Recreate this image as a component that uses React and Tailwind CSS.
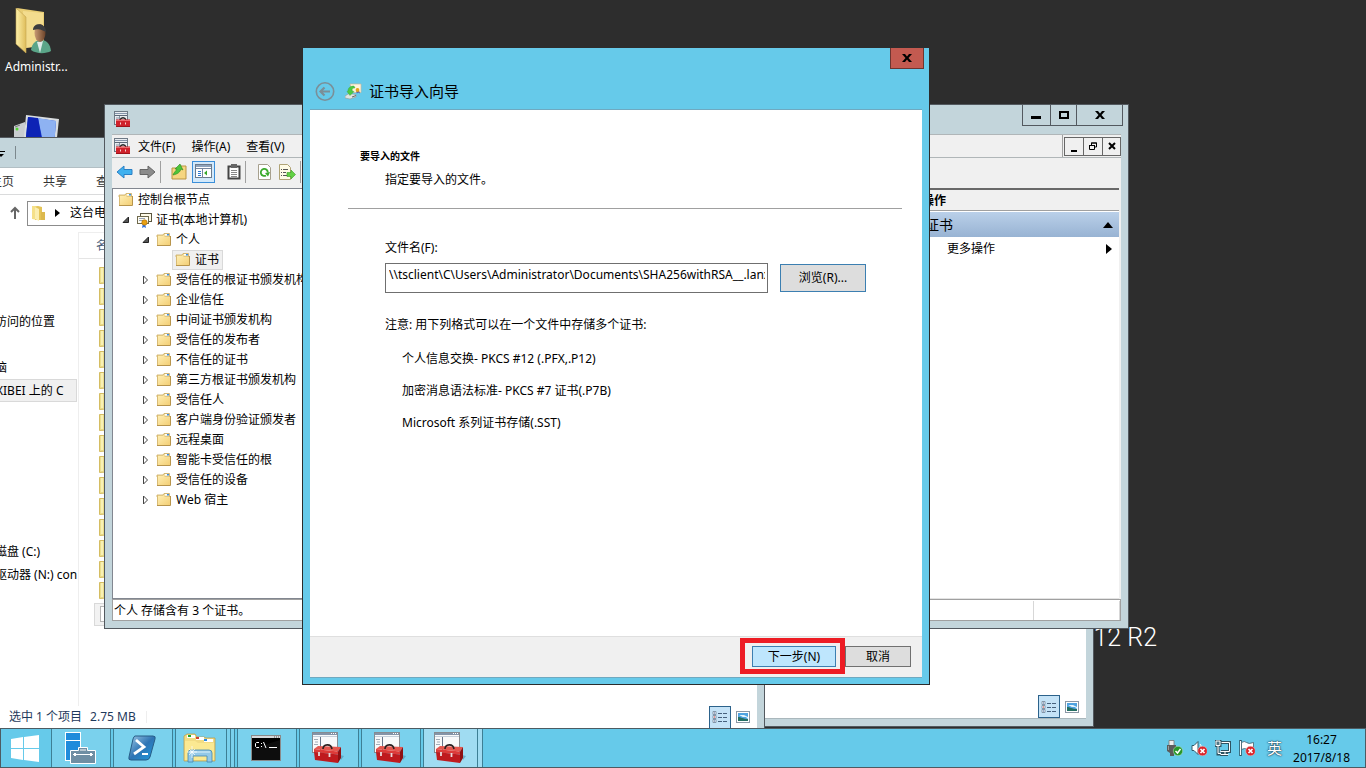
import React from "react";

const FONT = "font-['Noto_Sans','Noto_Sans_CJK_SC',sans-serif]";

const treeItems = [
  { text: "受信任的根证书颁发机构" },
  { text: "企业信任" },
  { text: "中间证书颁发机构" },
  { text: "受信任的发布者" },
  { text: "不信任的证书" },
  { text: "第三方根证书颁发机构" },
  { text: "受信任人" },
  { text: "客户端身份验证颁发者" },
  { text: "远程桌面" },
  { text: "智能卡受信任的根" },
  { text: "受信任的设备" },
  { text: "Web 宿主" },
];

// one entry per 23px row, empty rows are blank
const navRows = ["访问的位置", "", "脑", "XIBEI 上的 C", "", "", "", "", "", "", "磁盘 (C:)", "驱动器 (N:) con"];

const formats = [
  "个人信息交换- PKCS #12 (.PFX,.P12)",
  "加密消息语法标准- PKCS #7 证书(.P7B)",
  "Microsoft 系列证书存储(.SST)",
];

/* ---------- icons ---------- */

const FolderIcon = () => (
  <svg width="16" height="16" viewBox="0 0 16 16" className="shrink-0">
    <defs>
      <linearGradient id="folderFill" x1="0" y1="0" x2="1" y2="1">
        <stop offset="0" stopColor="#ffefb5" />
        <stop offset="1" stopColor="#f2cd72" />
      </linearGradient>
    </defs>
    <path d="M1 3h6l1-1.500h5.500V5H1z" fill="#f3dc98" stroke="#c9a95f" strokeWidth=".8" />
    <rect x="9" y="2" width="4" height="1.500" fill="#fff" />
    <rect x="11" y="2" width="2" height="1.500" fill="#3d8fe0" />
    <path d="M1 4h7l1 1h5v9H1z" fill="url(#folderFill)" />
    <path d="M1.500 14V4" stroke="#d8bb74" />
    <path d="M1 13.500h13.500V4" fill="none" stroke="#b8954c" />
  </svg>
);

const CertStoreIcon = () => (
  <svg width="16" height="16" viewBox="0 0 16 16" className="shrink-0">
    <rect x="4.500" y="1.500" width="11" height="8" fill="#fffbe8" stroke="#5b5640" />
    <rect x="1.500" y="4.500" width="11" height="7" fill="#fffdf4" stroke="#6f694c" />
    <path d="M3 6.500h6M3 8.500h4" stroke="#98a4b4" />
    <path d="M7 11l-1 5 2-1 2 1-1-5" fill="#2f6fe0" />
    <circle cx="8.500" cy="10.500" r="2.700" fill="#e8a013" stroke="#a96a00" strokeWidth=".6" />
  </svg>
);

const MmcIcon = () => (
  <svg width="17" height="17" viewBox="0 0 17 17" className="shrink-0">
    <rect x=".5" y=".5" width="13" height="13" fill="#e9edf1" stroke="#6e7a86" />
    <path d="M1 2.500h12" stroke="#8595ab" />
    <path d="M1 4.500h12" stroke="#5c6878" />
    <path d="M2 7h3M2 9h2M5.500 5v4" stroke="#8793a3" />
    <path d="M6 9c1-3 5-3 6 0" fill="none" stroke="#222" strokeWidth="1.300" />
    <path d="M2 8.500h14V16H2z" fill="#cf222b" />
    <path d="M2 9.500h14" stroke="#ee6a6c" />
    <path d="M6.500 11.500v2M11.500 11.500v2" stroke="#f3d5d5" />
    <path d="M2 15.500h14" stroke="#9c141b" />
  </svg>
);

const ToolboxIcon = () => (
  <svg width="34" height="34" viewBox="0 0 34 34" className="shrink-0">
    <path d="M29 24l4 1-3 4z" fill="#4a90ad" opacity=".6" />
    <rect x="1.500" y="1.500" width="25" height="20" fill="#f8f9fa" stroke="#858b91" />
    <path d="M2 3h24" stroke="#8494a8" strokeWidth="2" />
    <path d="M2 5.500h24" stroke="#c4ced9" />
    <path d="M20 2.500h1M22 2.500h1M24 2.500h1" stroke="#fff" />
    <path d="M9.500 6v15" stroke="#667589" />
    <path d="M3 8.500h4M4 11h3M3 13.500h4" stroke="#a2adb8" />
    <path d="M3 18l4-3 23 1-3 4.500z" fill="#e4574f" />
    <path d="M12 18c0-5 8-6 9 0" fill="none" stroke="#2c2222" strokeWidth="1.600" />
    <path d="M3 18l24 2.500v3L3 21z" fill="#dd3b39" />
    <path d="M3 21l24 2.500V32L4 29z" fill="#bf1a1e" />
    <path d="M27 20.500l3-4.500v11l-3 5z" fill="#8e1013" />
    <path d="M8 21v4M18.500 22v4" stroke="#e9dada" strokeWidth="1.800" />
  </svg>
);

const ListViewIcon = () => (
  <svg width="16" height="14" viewBox="0 0 16 14">
    <path d="M1 1.500h3v3H1zM1 5.500h3v3H1zM1 9.500h3v3H1z" fill="#fff" stroke="#8496a8" />
    <path d="M2 3h1M2 11h1" stroke="#2f5d9c" />
    <path d="M2 7h1" stroke="#d22" />
    <path d="M6 3.500h4M11 3.500h4M6 7.500h4M11 7.500h4M6 11.500h4M11 11.500h4" stroke="#47617d" />
  </svg>
);

const PictureIcon = () => (
  <svg width="14" height="12" viewBox="0 0 14 12">
    <rect x=".5" y=".5" width="13" height="11" fill="#fff" stroke="#8b98a6" />
    <rect x="2" y="2" width="10" height="8" fill="#4fa3e0" />
    <path d="M2 4c3 0 3 2 6 2s3 1 4 2V6L8 4H2z" fill="#e2f3fb" />
    <path d="M2 6c3 0 5 2 10 2v2H2z" fill="#256f62" />
  </svg>
);

const Badge = () => (
  <g>
    <circle cx="11.500" cy="11" r="4.800" fill="#d9252b" stroke="#f3c6c6" strokeWidth=".5" />
    <path d="M9.500 9l4 4M13.500 9l-4 4" stroke="#fff" strokeWidth="1.700" />
  </g>
);

const WindowX = () => (
  <svg width="10" height="8" viewBox="0 0 10 8">
    <path d="M0 0h3l2 2.500L7 0h3L6.500 4 10 8H7L5 5.500 3 8H0l3.500-4z" />
  </svg>
);

/* ---------- desktop ---------- */

const DesktopIcons = () => (
  <>
    <a href="#admin" className="absolute left-[5px] top-2 flex w-16 flex-col items-start text-white">
      <svg width="44" height="48" viewBox="0 0 44 48" className="ml-2">
        <defs>
          <linearGradient id="bigFolder" x1="0" x2="1">
            <stop offset="0" stopColor="#fdf0a8" />
            <stop offset="1" stopColor="#dfbd5b" />
          </linearGradient>
          <linearGradient id="face" x1="0" x2="1">
            <stop offset="0" stopColor="#c89a73" />
            <stop offset="1" stopColor="#6b4229" />
          </linearGradient>
        </defs>
        <path d="M4 0l27 4v34l-19 2z" fill="#e8cd74" />
        <path d="M10 3l20 2v32l-18 3z" fill="#f3dc8e" />
        <path d="M3 0l10 9v36L3 36z" fill="url(#bigFolder)" stroke="#c5a451" strokeWidth=".6" />
        <path d="M18 42c1-7 5-10 10-10 6 0 9 4 10 11-5 3-15 3-20-1z" fill="#5aa588" />
        <path d="M24 34l3 11 3-12z" fill="#dcebe8" />
        <ellipse cx="27" cy="25" rx="5.500" ry="9" fill="url(#face)" />
        <path d="M20 22c0-8 13-8 13 2-4-2-6-4-13-2z" fill="#3b3c3e" />
      </svg>
      <span className="pt-px text-[12px] leading-5">Administr...</span>
    </a>
    <svg width="46" height="34" viewBox="0 0 46 34" className="absolute left-[14px] top-[115px]">
      <path d="M0 11l11-4v26H0z" fill="#c9cdd0" />
      <path d="M1 12l5-2" stroke="#777" />
      <circle cx="3" cy="14" r="1.500" fill="#51d331" />
      <path d="M12 0l33 4-3 28H9z" fill="#d9dde0" />
      <path d="M14 2l28 4-2 26H11z" fill="#173fce" />
      <path d="M24 3l18 3-2 26H30z" fill="#8eb2f2" />
      <path d="M14 2l10 1 5 29H11z" fill="#0d23b5" />
    </svg>
    <div className="absolute right-[209px] top-[619px] whitespace-nowrap font-['Roboto',sans-serif] text-[25px] font-light leading-[38px] text-white">
      2012 R2
    </div>
  </>
);

const ViewButtons = () => (
  <div className="flex items-center gap-1">
    <button aria-label="详细信息" className="flex h-[23px] w-[22px] items-center justify-center border border-[#2c628b] bg-[#c5e3f7]">
      <ListViewIcon />
    </button>
    <button aria-label="大图标" className="flex h-[23px] w-[15px] items-center justify-center">
      <PictureIcon />
    </button>
  </div>
);

const BackExplorer = () => (
  <div className="absolute left-[700px] top-[300px] flex h-[427px] w-[394px] border border-[#53595f] bg-[#c3d5db] px-[7px] pb-[7px]">
    <div className="flex flex-1 items-end justify-end border-b border-[#aab7bc] bg-white pr-[7px]">
      <ViewButtons />
    </div>
  </div>
);

const Explorer = () => (
  <div className="absolute -left-4 bottom-0 top-[137px] flex w-[781px] flex-col border-r border-t border-[#53595f] bg-[#c3d5db] pr-[7px]">
    <div className="flex h-[29px] shrink-0 items-center pl-4">
      <svg width="18" height="14" viewBox="0 0 18 14">
        <path d="M0 5.500h5" stroke="#000" />
        <path d="M-2 8h6L1 11z" />
        <path d="M15.500 0v13" stroke="#7c888d" />
      </svg>
    </div>
    <div className="flex min-h-0 flex-1 flex-col border-t border-[#b2bfc4] bg-white">
      <div className="flex h-[27px] items-center gap-[29px] border-b border-[#dadbdc] pl-[6px] pt-[2px] text-[#333]">
        <button>主页</button>
        <button>共享</button>
        <button>查看</button>
      </div>
      <div className="flex h-[37px] items-center pb-px pl-[25px]">
        <svg width="12" height="14" viewBox="0 0 12 14">
          <path d="M6 13V2M2 6l4-4 4 4" fill="none" stroke="#666" strokeWidth="2" />
        </svg>
        <div className="ml-[6px] flex h-[25px] flex-1 items-center border border-[#8c8c8c] pl-[3px]">
          <svg width="15" height="16" viewBox="0 0 15 16">
            <path d="M1 1h6v14l-6-1z" fill="#f5e089" />
            <path d="M7 1l4 1v13H4V2z" fill="#e4c458" />
            <path d="M4 2l4 2v12l-4-2z" fill="#fbeeb0" />
            <path d="M10 7h4v8h-4z" fill="#dcb94e" />
          </svg>
          <svg width="6" height="8" viewBox="0 0 6 8" className="ml-[9px]">
            <path d="M0 0l5 4-5 4z" />
          </svg>
          <span className="ml-[9px]">这台电脑</span>
        </div>
      </div>
      <div className="flex min-h-0 flex-1">
        <ul className="w-[94px] shrink-0 overflow-hidden whitespace-nowrap pt-[78px]">
          {navRows.map((row, i) => (
            <li
              key={i}
              className={`mr-px flex h-[23px] items-center pl-[11px] ${
                i === 3 ? "border border-[#d9d9d9] bg-[#f0f0f0]" : ""
              }`}
            >
              {row}
            </li>
          ))}
        </ul>
        <div className="flex-1 border-l border-t border-[#eee]">
          <div className="h-[26px] border-b border-[#e5e5e5] pl-[17px] leading-[25px] text-[#4c607a]">名称</div>
          <ul className="pl-5 pt-2">
            {Array.from({ length: 16 }, (_, i) => (
              <li key={i} className="h-[21px]">
                <svg width="16" height="17" viewBox="0 0 16 17">
                  <path d="M.5.5H15v15l-14.500 1z" fill="#ecdf8d" stroke="#d5bd62" />
                  <path d="M2 1h2v14H2z" fill="#f8f0b4" />
                </svg>
              </li>
            ))}
          </ul>
          <div className="ml-[15px] h-[23px] border border-[#d9d9d9] bg-[#f2f2f2] pl-[5px] pt-[2px]">
            <div className="h-4 w-3 border border-[#b5b5b5] bg-white" />
          </div>
        </div>
      </div>
      <div className="flex h-[22px] items-center pl-[25px] pr-[7px] text-[#1e395b]">
        <span>选中 1 个项目</span>
        <span className="ml-2">2.75 MB</span>
        <span className="ml-[10px] h-3 border-l border-[#eee]" />
        <div className="ml-auto">
          <ViewButtons />
        </div>
      </div>
    </div>
  </div>
);

/* ---------- console window ---------- */

const TreeRow = ({ indent, twist, icon, text, selected }) => (
  <li className={`flex h-5 items-center ${indent}`}>
    <span className="flex w-[14px] shrink-0 items-center">
      {twist === "open" && (
        <svg width="8" height="8" viewBox="0 0 8 8">
          <path d="M6.500 1v5.500H1z" fill="#555" stroke="#222" />
        </svg>
      )}
      {twist === "closed" && (
        <svg width="8" height="10" viewBox="0 0 8 10">
          <path d="M1.500 1l4 4-4 4z" fill="#fff" stroke="#444" />
        </svg>
      )}
    </span>
    <span
      className={`flex h-5 items-center gap-1 whitespace-nowrap ${
        selected ? "border border-[#d9d9d9] bg-[#f0f0f0] pl-[2px] pr-[3px]" : ""
      }`}
    >
      {icon || <FolderIcon />}
      <span>{text}</span>
    </span>
  </li>
);

const Toolbar = () => (
  <div className="flex h-[30px] items-center bg-[#f0f0f0] pb-[3px] pl-[4px]">
    <button aria-label="后退">
      <svg width="17" height="16" viewBox="0 0 17 16">
        <path d="M1 8l7-6v3.500h8v5H8V14z" fill="#3fb1ef" stroke="#2b7fc4" />
      </svg>
    </button>
    <button aria-label="前进" className="ml-[6px]">
      <svg width="17" height="16" viewBox="0 0 17 16">
        <path d="M16 8L9 2v3.500H1v5h8V14z" fill="#8c8c8c" stroke="#666" />
      </svg>
    </button>
    <span className="ml-[4px] h-[22px] border-l border-[#a0a0a0]" />
    <button aria-label="上一级" className="ml-[10px]">
      <svg width="16" height="16" viewBox="0 0 16 16">
        <path d="M1 15V4h5l2-2h7v13z" fill="#f6d681" stroke="#bb9442" />
        <path d="M2 11C3 8 5 7 6 5L4 5l5-5 3 6-2-1c-1 3-3 5-8 6z" fill="#4cc43a" stroke="#278a1d" strokeWidth=".6" />
      </svg>
    </button>
    <button aria-label="显示/隐藏控制台树" className="ml-[5px] flex h-[22px] w-[23px] items-center justify-center border border-[#3c8fd9] bg-[#d3e9fb]">
      <svg width="17" height="15" viewBox="0 0 17 15">
        <rect x=".5" y=".5" width="16" height="13" fill="#fff" stroke="#6c7b8c" />
        <path d="M1 2h15" stroke="#8fa4bd" strokeWidth="2" />
        <path d="M1 4.500h15M7.500 5v9" stroke="#7687a0" />
        <path d="M3 7.500h3M3 9.500h3M3 11.500h3" stroke="#2b78d0" />
        <path d="M12 6.500v5l-3-2.500z" fill="#38a72a" />
      </svg>
    </button>
    <button aria-label="剪贴板" className="ml-[12px]">
      <svg width="14" height="16" viewBox="0 0 14 16">
        <path d="M1.500 2.500h11v12h-11z" fill="#fff" stroke="#444" strokeWidth="2" />
        <path d="M4 0h6v4H4z" fill="#666" />
        <path d="M4 6.500h6M4 8.500h6M4 10.500h6M4 12.500h6" stroke="#888" />
      </svg>
    </button>
    <span className="ml-[4px] h-[22px] border-l border-[#a0a0a0]" />
    <button aria-label="刷新" className="ml-[11px]">
      <svg width="15" height="16" viewBox="0 0 15 16">
        <path d="M1.500.5h9l3 3v12h-12z" fill="#fff" stroke="#a7a08e" />
        <path d="M9 11.500a3.500 3.500 0 1 1 1.800-3" fill="none" stroke="#3aaa2c" strokeWidth="1.800" />
        <path d="M13 8l-2 4.500L8 9z" fill="#3aaa2c" />
      </svg>
    </button>
    <button aria-label="导出列表" className="ml-[7px]">
      <svg width="17" height="16" viewBox="0 0 17 16">
        <path d="M.5.5h8l3 3v12H.5z" fill="#fffbe6" stroke="#b0a376" />
        <path d="M2 5.500h1M4 5.500h5M2 8.500h1M4 8.500h3M2 11.500h1M4 11.500h4" stroke="#555" />
        <path d="M8 8.500h4V6l4.500 4.500L12 15v-2.500H8z" fill="#62d044" stroke="#3a9f22" strokeWidth=".6" />
      </svg>
    </button>
    <span className="ml-[4px] h-[22px] border-l border-[#a0a0a0]" />
  </div>
);

const ConsoleWindow = () => (
  <div className="absolute left-[104px] top-[104px] flex h-[525px] w-[1025px] flex-col border border-[#53595f] bg-[#c3d5db] px-[7px] pb-[7px]">
    <div className="flex h-[29px] shrink-0 items-start">
      <div className="pl-[2px] pt-[6px]">
        <MmcIcon />
      </div>
      <div className="-mr-[2px] ml-auto flex h-[21px] divide-x divide-[#53595f] border border-t-0 border-[#53595f]">
        <button aria-label="最小化" className="flex w-[28px] items-center justify-center pr-px">
          <span className="mt-[5px] h-[3px] w-[10px] bg-black" />
        </button>
        <button aria-label="最大化" className="flex w-[26px] items-center justify-center">
          <span className="h-2 w-[10px] border-2 border-black" />
        </button>
        <button aria-label="关闭" className="flex w-[45px] items-center justify-center">
          <WindowX />
        </button>
      </div>
    </div>
    <div className="flex h-6 shrink-0 items-center border-b border-t border-[#b0b6b8] bg-[#f0f0f0] pl-[2px]">
      <MmcIcon />
      <div className="flex gap-4 pl-[7px] pt-[2px]">
        <button>文件(F)</button>
        <button>操作(A)</button>
        <button>查看(V)</button>
      </div>
      <div className="ml-auto flex h-full items-center border-l border-[#a0a0a0] pl-px">
        <button aria-label="最小化子窗口" className="flex h-[19px] w-5 items-end justify-center border border-[#666] pb-[3px]">
          <span className="h-[2px] w-[6px] bg-black" />
        </button>
        <button aria-label="还原子窗口" className="-ml-px flex h-[19px] w-5 items-center justify-center border border-[#666]">
          <svg width="8" height="8" viewBox="0 0 8 8">
            <path d="M2.500 3V1h5v4h-2M.5 3.500h5v4h-5zM0 3.500h6M2 1h6" fill="none" stroke="#000" />
          </svg>
        </button>
        <button aria-label="关闭子窗口" className="-ml-px flex h-[19px] w-[19px] items-center justify-center border border-[#666]">
          <svg width="8" height="8" viewBox="0 0 8 8">
            <path d="M1 1l6 6M7 1L1 7" stroke="#000" strokeWidth="2" />
          </svg>
        </button>
      </div>
    </div>
    <Toolbar />
    <div className="flex min-h-0 flex-1 bg-[#f0f0f0]">
      <div className="w-[340px] overflow-hidden border border-[#828790] bg-white">
        <ul className="pl-px pt-px">
          <TreeRow indent="-ml-[10px]" text="控制台根节点" />
          <TreeRow indent="pl-[8px]" twist="open" icon={<CertStoreIcon />} text="证书(本地计算机)" />
          <TreeRow indent="pl-[28px]" twist="open" text="个人" />
          <TreeRow indent="pl-[44px]" text="证书" selected />
          {treeItems.map((item) => (
            <TreeRow key={item.text} indent="pl-[28px]" twist="closed" text={item.text} />
          ))}
        </ul>
      </div>
      <div className="ml-1 flex-1 border border-[#828790] bg-white" />
      <div className="mr-[2px] w-[204px] border-b border-t-2 border-b-[#e3e3e3] border-t-[#696969] bg-white">
        <div className="h-[21px] border-b border-[#a0a0a0] bg-[#f0f0f0] pl-[7px] pt-px font-bold leading-5">操作</div>
        <div className="flex h-[26px] items-center border-t border-white bg-linear-to-b from-[#bad0e9] to-[#98b3d3] pl-[10px] pr-[6px] text-[14px]">
          <span>证书</span>
          <svg width="10" height="6" viewBox="0 0 10 6" className="ml-auto">
            <path d="M5 0l5 6H0z" />
          </svg>
        </div>
        <button className="flex h-6 w-full items-center pl-8 pr-[7px]">
          <span>更多操作</span>
          <svg width="6" height="10" viewBox="0 0 6 10" className="ml-auto">
            <path d="M0 0l6 5-6 5z" />
          </svg>
        </button>
      </div>
    </div>
    <div className="flex h-[22px] shrink-0 border border-[#a0a0a0] bg-white pt-px leading-5">
      <span className="flex-1 pl-px">个人 存储含有 3 个证书。</span>
      <span className="w-[87px] border-l border-r border-[#d7d7d7]" />
    </div>
  </div>
);

/* ---------- wizard ---------- */

const ImportWizard = () => (
  <div className="absolute left-[302px] top-[48px] flex h-[637px] w-[628px] flex-col border border-t-0 border-[#2b2b2b] bg-[#66caea] px-[7px] pb-[6px]">
    <div className="flex h-[61px] shrink-0 justify-between">
      <div className="flex items-center gap-[10px] self-end pb-[6px] pl-[5px]">
        <button aria-label="上一步">
          <svg width="20" height="20" viewBox="0 0 20 20" className="block">
            <circle cx="10" cy="10.500" r="8.700" fill="none" stroke="#7b8f98" strokeWidth="1.600" />
            <path d="M15 10.500H6M9.500 6.500l-4 4 4 4" fill="none" stroke="#7b8f98" strokeWidth="2.200" />
          </svg>
        </button>
        <div className="flex items-center gap-[7px]">
          <svg width="17" height="17" viewBox="0 0 17 17">
            <path d="M5 1h11v8.500H8z" fill="#fff4dd" stroke="#c9b99c" strokeWidth=".7" />
            <path d="M11 8.500l1 2 1-1 2 1-1-3" fill="#4a5fae" />
            <circle cx="12.500" cy="7" r="1.900" fill="#e3a21a" />
            <path d="M0 13l4-2.500 7 1V14l-6 2-5-1z" fill="#dfe5e2" stroke="#8f9b97" strokeWidth=".6" />
            <path d="M9 3C5 3 3 5 3 8l-1 .5 3 4 4-4-2-.5c0-2 0-3 3-3z" fill="#4ccb42" stroke="#37a234" strokeWidth=".4" />
            <path d="M7 14l4-1.500" stroke="#666" />
          </svg>
          <h1 className="text-[15px] leading-6">证书导入向导</h1>
        </div>
      </div>
      <button aria-label="关闭" className="-mr-[2px] flex h-[21px] w-[34px] items-center justify-center border border-t-0 border-[#6d3530] bg-[#c35a50]">
        <WindowX />
      </button>
    </div>
    <div className="flex min-h-0 flex-1 flex-col border-b border-t border-[#6fa9c0] bg-white">
      <div className="flex-1 pl-[38px] pr-5 pt-[38px]">
        <div className="border-b border-[#a0a0a0] pb-[18px] pl-3">
          <h2 className="text-[10px] font-bold leading-4">要导入的文件</h2>
          <p className="pl-[25px] pt-[6px] leading-5">指定要导入的文件。</p>
        </div>
        <form className="pl-[37px] pt-[29px]" onSubmit={(e) => e.preventDefault()}>
          <label htmlFor="file" className="block leading-5">
            文件名(F):
          </label>
          <div className="mt-[5px] flex items-center gap-3 pr-9">
            <input
              id="file"
              type="text"
              defaultValue="\\tsclient\C\Users\Administrator\Documents\SHA256withRSA__.lanxibei.pfx"
              className="h-[30px] min-w-0 flex-1 border border-[#6f6f6f] bg-white pb-2 pl-[3px] pr-[2px] outline-none"
            />
            <button type="button" className="h-7 w-[86px] border border-[#3c7fb1] bg-[#ddd]">
              浏览(R)...
            </button>
          </div>
          <p className="mt-[22px] leading-5">注意: 用下列格式可以在一个文件中存储多个证书:</p>
          <ul className="mt-2 pl-[17px]">
            {formats.map((format) => (
              <li key={format} className="leading-8">
                {format}
              </li>
            ))}
          </ul>
        </form>
      </div>
      <div className="flex h-[41px] items-center justify-end border-t border-[#dfdfdf] bg-[#f0f0f0] pb-[2px] pr-[11px]">
        <div className="flex h-9 w-[105px] items-center justify-end border-[5px] border-[#ed1c24] pr-[4px]">
          <button className="h-[21px] w-[84px] border border-[#3c7fb1] bg-[#bee6fd] leading-[19px]">下一步(N)</button>
        </div>
        <button className="h-[21px] w-[66px] border border-[#707070] bg-[#ddd] leading-[19px]">取消</button>
      </div>
    </div>
  </div>
);

/* ---------- taskbar ---------- */

const TaskButton = ({ label, children, stack, active }) => (
  <div className="flex h-full">
    <button
      aria-label={label}
      className={`flex items-center justify-center border-l border-r border-[#3d7f95] pr-[2px] ${
        active ? "bg-[#a0dcf2]" : "bg-[#7ad1ed]"
      } ${stack ? (active ? "w-[55px]" : "w-[52px]") : "w-[60px]"}`}
    >
      {children}
    </button>
    {stack && <span className={`border-r border-[#3d7f95] ${active ? "w-[5px] bg-[#a0dcf2]" : "w-[4px] bg-[#7ad1ed]"}`} />}
    {stack && !active && <span className="w-[4px] border-r border-[#3d7f95] bg-[#7ad1ed]" />}
  </div>
);

const Taskbar = () => (
  <div className="flex h-10 shrink-0 items-stretch border border-[#4d5b62] bg-[#66caea]">
    <button aria-label="开始" className="flex w-[50px] items-center justify-center pr-[2px]">
      <svg width="28" height="27" viewBox="0 0 28 27" fill="#fff">
        <path d="M0 4l12-2v11H0zM13 2l15-2v13H13zM0 14h12v11L0 23zM13 14h15v13l-15-2z" />
      </svg>
    </button>
    <div className="flex gap-[2px]">
      <TaskButton label="服务器管理器">
        <svg width="34" height="34" viewBox="0 0 34 34">
          <rect x="2" y="1" width="16" height="29" fill="#fff" />
          <path d="M3 2h14v7H3zM3 10h14v19H3z" fill="#1f8bdb" />
          <path d="M7.500 32.500v-13h8v-3h9v3h8v13z" fill="#6f8ea3" stroke="#fff" />
          <path d="M17 19h6" stroke="#fff" />
          <path d="M10 23.500h20" stroke="#fff" />
          <path d="M12 22v3M28 22v3" stroke="#fff" strokeWidth="2" />
        </svg>
      </TaskButton>
      <TaskButton label="PowerShell">
        <svg width="30" height="26" viewBox="0 0 30 26">
          <defs>
            <linearGradient id="ps" x1="0" y1="0" x2="1" y2="1">
              <stop offset="0" stopColor="#9fc9e6" />
              <stop offset=".5" stopColor="#2e74b4" />
              <stop offset="1" stopColor="#1c9be0" />
            </linearGradient>
          </defs>
          <path d="M8 1h18q3 0 2 3l-5 18q-1 3-4 3H4q-3 0-2-3L6 4q1-3 2-3z" fill="url(#ps)" stroke="#275d87" />
          <path d="M9 5l8 7-10 7" fill="none" stroke="#fff" strokeWidth="2.800" />
          <path d="M15 19h6" stroke="#fff" strokeWidth="2" />
        </svg>
      </TaskButton>
      <TaskButton label="文件资源管理器" stack>
        <svg width="34" height="32" viewBox="0 0 34 32">
          <path d="M1 29V4l3-2h8l2 3h7l2 1h9v23z" fill="#f2dc84" stroke="#b79a45" strokeWidth=".7" />
          <path d="M4 3h8v3H4zM13 5h8v3h-8zM21 7h9v3h-9z" fill="#fff" />
          <path d="M5 3h3v2H5z" fill="#1ea632" />
          <path d="M13 5h3v2h-3z" fill="#d2412e" />
          <path d="M21 7h3v2h-3z" fill="#2c8be0" />
          <path d="M2 9h10l3 2h16v17H2z" fill="#fbe992" />
          <path d="M5 30V21q0-3 3-3h18q3 0 3 3v9h-5v-6H10v6z" fill="#93c9e8" stroke="#4187b0" strokeWidth=".8" />
          <path d="M7 20h20" stroke="#ddf2fb" />
          <path d="M9 14v12M4 20h10M6 17l6 6M12 17l-6 6" stroke="#fff" strokeWidth=".7" />
        </svg>
      </TaskButton>
      <TaskButton label="命令提示符">
        <svg width="30" height="26" viewBox="0 0 30 26">
          <rect x=".5" y=".5" width="29" height="25" fill="#000" stroke="#8a8a8a" />
          <path d="M1 1h28v2H1z" fill="#d6d9dc" />
          <path d="M23 2h1M25 2h1M27 2h1" stroke="#555" />
          <path d="M8 7.500H5.500l-1 1v3l1 1H8M10.500 8v1M10.500 11v1M12.500 7l2.500 6M18 12.500h8" fill="none" stroke="#fff" />
          <path d="M1 14l28-9v20H1z" fill="#fff" opacity=".05" />
        </svg>
      </TaskButton>
      <TaskButton label="控制台 1">
        <ToolboxIcon />
      </TaskButton>
      <TaskButton label="控制台 2">
        <ToolboxIcon />
      </TaskButton>
      <TaskButton label="控制台 3" stack active>
        <ToolboxIcon />
      </TaskButton>
    </div>
    <div className="ml-auto flex items-center pr-[15px]">
      <div className="flex items-center gap-2">
        <svg width="16" height="16" viewBox="0 0 16 16">
          <path d="M2 .5h5v5H2z" fill="#eee" stroke="#777" strokeWidth=".8" />
          <path d="M0 5h9v6l-2 2v3H3v-3l-3-2z" fill="#5b5b5b" />
          <path d="M1.500 6v4" stroke="#999" />
          <circle cx="11" cy="11" r="4.700" fill="#27972a" stroke="#bfe3bf" strokeWidth=".5" />
          <path d="M8.500 11l2 2 3-4" fill="none" stroke="#fff" strokeWidth="1.500" />
        </svg>
        <svg width="16" height="16" viewBox="0 0 16 16">
          <path d="M1 5.500h2l4-4v13l-4-4H1z" fill="#fff" stroke="#355a69" />
          <path d="M9 4q2 2 1 4" fill="none" stroke="#fff" />
          <Badge />
        </svg>
        <svg width="16" height="16" viewBox="0 0 16 16">
          <path d="M4 2.500h10.500v9H6M10 12v2.500M5 14.500h8" fill="none" stroke="#2f5361" strokeWidth="3" />
          <path d="M4 2.500h10.500v9H5M10 12v2.500M5.500 14.500h8" fill="none" stroke="#fff" />
          <path d="M1 1h4v4.500H1zM3 6v8h2" fill="none" stroke="#2f5361" strokeWidth="3" />
          <path d="M1 1h4v4.500H1zM3 6v7.500h3" fill="#4e7685" stroke="#fff" />
        </svg>
        <svg width="16" height="16" viewBox="0 0 16 16">
          <path d="M1.500 0v16" stroke="#2f5361" strokeWidth="2.500" />
          <path d="M2.500 2.500q3-2 5 0t7 0v7q-3 2-6 0t-6 0z" fill="#fff" stroke="#41616d" strokeWidth=".8" />
          <path d="M1.500 1v14" stroke="#fff" />
          <Badge />
        </svg>
      </div>
      <span className="ml-3 text-[15px] text-white [text-shadow:0_0_1px_#123,0_0_2px_#123]">英</span>
      <div className="ml-[11px] pt-px text-center leading-[18px]">
        <div>16:27</div>
        <div>2017/8/18</div>
      </div>
    </div>
  </div>
);

export default function App() {
  return (
    <div className={`flex h-screen flex-col overflow-hidden bg-[#2d2d2d] text-[12px] text-black ${FONT}`}>
      <div className="relative min-h-0 flex-1 overflow-hidden">
        <DesktopIcons />
        <BackExplorer />
        <Explorer />
        <ConsoleWindow />
        <ImportWizard />
      </div>
      <Taskbar />
    </div>
  );
}
